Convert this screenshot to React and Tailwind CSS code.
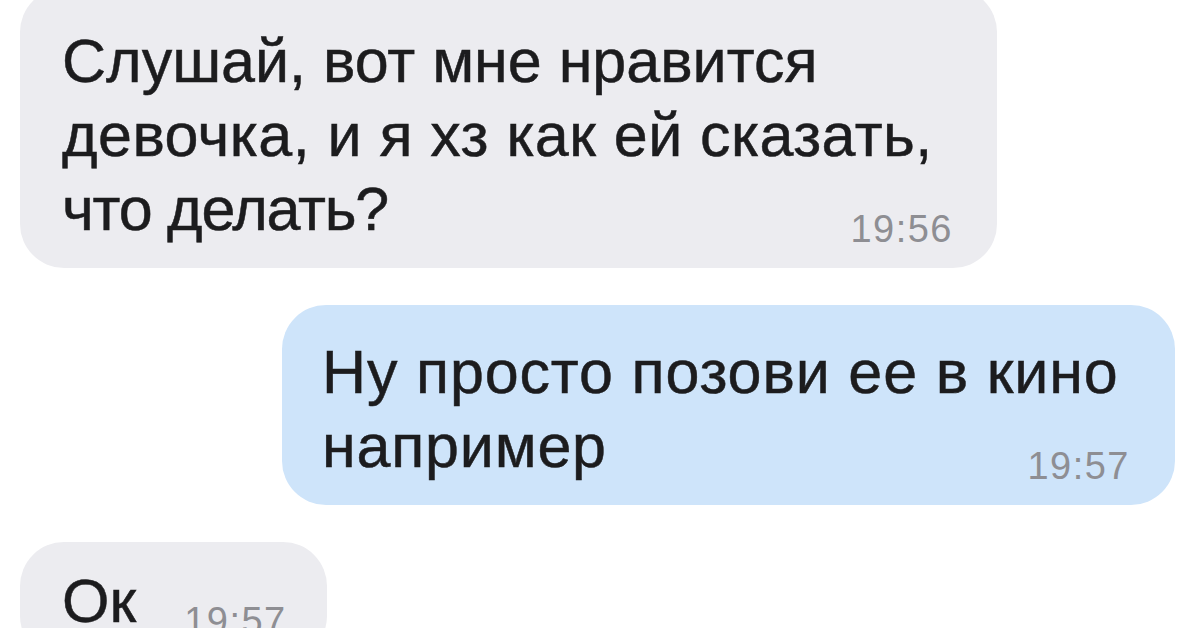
const FONT = { fontFamily: '"Liberation Sans", Arial, sans-serif' };

export default function App() {
  return (
    <div className="w-[1200px] h-[628px] overflow-hidden bg-white text-[#1c1c1e]" style={FONT}>
      <div className="flex flex-col">
        {/* incoming */}
        <div className="ml-[20px] -mt-[12px] w-[977px] rounded-[44px] bg-[#ececf0] pl-[42px] pr-[44px] pt-[36px] pb-[22px] text-[61px] leading-[74px] [-webkit-text-stroke:0.5px_#1c1c1e]">
          <div>Слушай, вот мне нравится</div>
          <div className="tracking-[0.45px]">девочка, и я хз как ей сказать,</div>
          <div className="flex items-end justify-between">
            <span className="tracking-[-1.2px]">что делать?</span>
            <Time>19:56</Time>
          </div>
        </div>

        {/* outgoing */}
        <div className="ml-[282px] mt-[37px] w-[893px] rounded-[44px] bg-[#cee4fa] pl-[40px] pr-[45px] pt-[30px] pb-[22px] text-[61px] leading-[74px] [-webkit-text-stroke:0.5px_#1c1c1e]">
          <div className="tracking-[0.85px]">Ну просто позови ее в кино</div>
          <div className="flex items-end justify-between">
            <span className="tracking-[0.8px]">например</span>
            <Time>19:57</Time>
          </div>
        </div>

        {/* incoming short */}
        <div className="ml-[20px] mt-[37px] w-[307px] rounded-[44px] bg-[#ececf0] pl-[42px] pr-[40px] pt-[22px] pb-[22px] text-[61px] leading-[74px] [-webkit-text-stroke:0.5px_#1c1c1e]">
          <div className="flex items-end gap-[48px]">
            <span>Ок</span>
            <Time>19:57</Time>
          </div>
        </div>
      </div>
    </div>
  );
}

function Time({ children }) {
  return (
    <span className="-mb-[2px] text-[38px] leading-[38px] tracking-[1.5px] text-[#8e8e93] [-webkit-text-stroke:0]">{children}</span>
  );
}
